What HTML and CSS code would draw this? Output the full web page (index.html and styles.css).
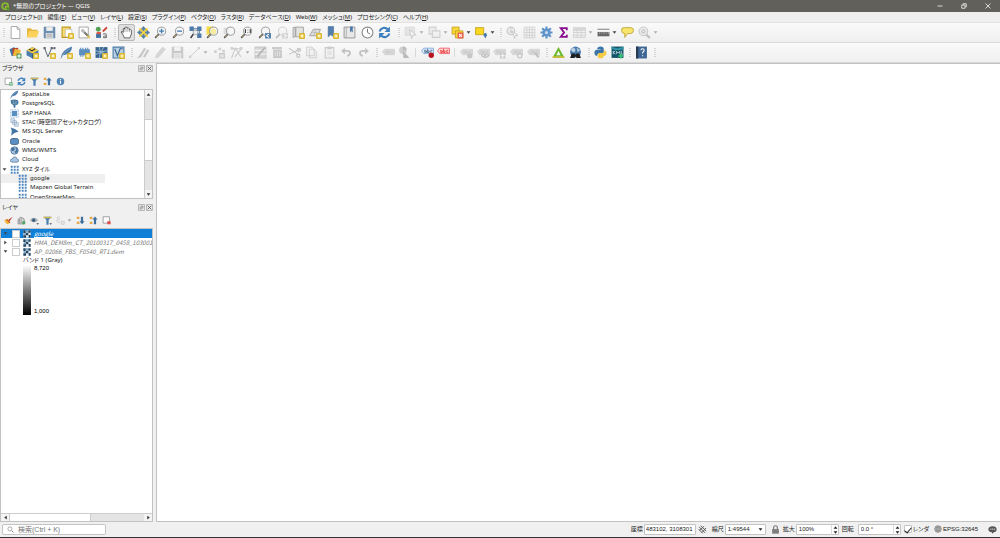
FILE: index.html
```html
<!DOCTYPE html>
<html lang="ja">
<head>
<meta charset="utf-8">
<title>*無題のプロジェクト — QGIS</title>
<link rel="stylesheet" href="styles.css">
</head>
<body>
<svg class="defs" aria-hidden="true">
<symbol id="star" viewBox="0 0 24 24"><rect x="13" y="13" width="11" height="11" rx="2" fill="#d9b52b"/><path d="M18.500 14.500v8M14.500 18.500h8M16 16l5 5M21 16l-5 5" stroke="#fff7c8" stroke-width="1.500"/></symbol>
<symbol id="mag" viewBox="0 0 24 24"><path d="M9 15L3 21" stroke="#555" stroke-width="3" stroke-linecap="round"/><path d="M7 17L4 20" stroke="#c9a93a" stroke-width="1.500"/><circle cx="14" cy="9.500" r="7.500" fill="#f4f6f8" fill-opacity=".8" stroke="#888" stroke-width="1.500"/></symbol>
<symbol id="new" viewBox="0 0 24 24"><path d="M4 1h11l5 5v17H4z" fill="#fff" stroke="#999" stroke-width="1.500"/><path d="M15 1v5h5" fill="none" stroke="#999" stroke-width="1.500"/></symbol>
<symbol id="open" viewBox="0 0 24 24"><path d="M2 21V4h7l2 3h10v4" fill="#e3b53e"/><path d="M2 21L6 9h18l-4 12z" fill="#fad25c"/></symbol>
<symbol id="save" viewBox="0 0 24 24"><path d="M2 2h20v20H2z" fill="#6c8fb4" stroke="#55779b"/><path d="M6 2h12v7H6z" fill="#eee"/><path d="M5 13h14v9H5z" fill="#ddd"/><path d="M7 16h10M7 19h10" stroke="#888"/></symbol>
<symbol id="layout" viewBox="0 0 24 24"><path d="M2 2h15v19H2z" fill="#f5dc74" stroke="#c39a1f" stroke-width="2"/><path d="M8 6h12v14H8z" fill="#fff" stroke="#aaa"/><use href="#star"/></symbol>
<symbol id="manager" viewBox="0 0 24 24"><path d="M2 2h17v20H2z" fill="#fff" stroke="#999" stroke-width="1.500"/><path d="M7 7l13 13" stroke="#777" stroke-width="4"/><path d="M7 7l5 5" stroke="#bbb" stroke-width="5"/><path d="M17 18l5 4" stroke="#e6c342" stroke-width="3"/></symbol>
<symbol id="style" viewBox="0 0 24 24"><circle cx="6" cy="6" r="4.500" fill="#54a052"/><path d="M13 9l8-8 2 3-7 7z" fill="#c43" /><path d="M2 14h9v8H2z" fill="#3f6f9f"/><path d="M3 11h8v4H3z" fill="#d54"/><path d="M15 15q6-2 6 2v5m0-4q-6 0-5 3 2 2 5-1" fill="none" stroke="#777" stroke-width="2"/></symbol>
<symbol id="hand" viewBox="0 0 24 24"><path d="M8 22l-2-5-4-6q1-3 4 1V5q2-3 3 1V3q2-3 4 0v1q3-2 4 1v2q3-1 4 1v7l-3 7z" fill="#fff" stroke="#444" stroke-width="1.500"/><path d="M9 6v5M13 4v7M17 6v5" stroke="#555"/></symbol>
<symbol id="pansel" viewBox="0 0 24 24"><path d="M4 4h6v6H4zM14 4h6v6h-6zM4 14h6v6H4zM14 14h6v6h-6z" fill="#f7d438"/><path d="M12 0l5 6h-3v4h4V7l6 5-6 5v-3h-4v4h3l-5 6-5-6h3v-4H6v3l-6-5 6-5v3h4V6H7z" fill="#587fa8"/><path d="M9 9h6v6H9z" fill="#f7d438"/></symbol>
<symbol id="zin" viewBox="0 0 24 24"><use href="#mag"/><path d="M9.500 9.500h9M14 5v9" stroke="#477db5" stroke-width="2.500"/></symbol>
<symbol id="zout" viewBox="0 0 24 24"><use href="#mag"/><path d="M9.500 9.500h9" stroke="#477db5" stroke-width="2.500"/></symbol>
<symbol id="zfull" viewBox="0 0 24 24"><path d="M1 1h8v8H1zM15 1h8v8h-8zM15 14h8v8h-8z" fill="#4c7aaa"/><path d="M5 5h14v13M12 11l7 7M6 17L18 5" stroke="#547ea8" stroke-width="2" fill="none"/><path d="M8 15l-5 7" stroke="#444" stroke-width="3"/><path d="M8 8h8v8H8z" fill="#e8eef2" stroke="#777"/></symbol>
<symbol id="zsel" viewBox="0 0 24 24"><path d="M1 1h13v15H1z" fill="#f6dc40"/><use href="#mag"/><circle cx="14" cy="10" r="5" fill="#f6ea9c"/></symbol>
<symbol id="zlayer" viewBox="0 0 24 24"><path d="M1 3h11v12H1z" fill="#ddd"/><use href="#mag"/></symbol>
<symbol id="znative" viewBox="0 0 24 24"><use href="#mag"/><path d="M10 6v7M19 6v7M14.500 7v1M14.500 11v1" stroke="#333" stroke-width="2"/></symbol>
<symbol id="zlast" viewBox="0 0 24 24"><use href="#mag"/><path d="M13 13h11v10H13z" fill="#5681ad"/><path d="M20 15l-4 3 4 3" fill="none" stroke="#fff" stroke-width="2"/></symbol>
<symbol id="znext" viewBox="0 0 24 24"><use href="#mag"/><path d="M13 13h11v10H13z" fill="#aaa"/><path d="M17 15l4 3-4 3" fill="none" stroke="#fff" stroke-width="2"/></symbol>
<symbol id="map" viewBox="0 0 24 24"><path d="M2 3l4-1v18l-4 1zM7 2h14v18H7z" fill="#e2e2e0" stroke="#999" stroke-width="1.500"/><use href="#star"/></symbol>
<symbol id="map3d" viewBox="0 0 24 24"><path d="M8 6h13l-4 12H1z" fill="#ddd" stroke="#999" stroke-width="1.500"/><path d="M6 12h10M12 6l-3 12" stroke="#aaa"/><use href="#star"/></symbol>
<symbol id="bm" viewBox="0 0 24 24"><path d="M4 1h10v19l-5-4-5 4z" fill="#537faf" stroke="#426a94"/><use href="#star"/></symbol>
<symbol id="book" viewBox="0 0 24 24"><path d="M2 2h20v20H2z" fill="#e8e8e8" stroke="#888" stroke-width="1.500"/><path d="M6 2v20" stroke="#888"/><path d="M13 1h5v11l-2.500-3L13 12z" fill="#4c7aaa"/></symbol>
<symbol id="clock" viewBox="0 0 24 24"><circle cx="12" cy="12" r="10" fill="#fff" stroke="#888" stroke-width="2"/><path d="M12 5v7l5 3" fill="none" stroke="#777" stroke-width="1.800"/></symbol>
<symbol id="refresh" viewBox="0 0 24 24"><path d="M3 10a9 9 0 0 1 15-4M21 14a9 9 0 0 1-15 4" fill="none" stroke="#3e7fbd" stroke-width="4"/><path d="M22 1v10H12zM2 23V13h10z" fill="#3e7fbd"/></symbol>
<symbol id="select" viewBox="0 0 24 24"><path d="M2 2h17v15H2z" fill="#ccc" stroke="#999" stroke-width="1.500" stroke-dasharray="3 1"/><path d="M10 7l12 9-6 1-2 6z" fill="#fff" stroke="#777" stroke-width="1.500"/></symbol>
<symbol id="stack" viewBox="0 0 24 24"><path d="M2 2h13v13H2z" fill="#ddd" stroke="#999" stroke-width="2"/><path d="M8 9h14v12H8z" fill="#eee" stroke="#999" stroke-width="2"/></symbol>
<symbol id="desel" viewBox="0 0 24 24"><path d="M2 2h13v13H2z" fill="#f6d938" stroke="#c59d1b" stroke-width="1.500"/><path d="M8 9h14v13H8z" fill="#f6d938" stroke="#c59d1b" stroke-width="1.500"/><path d="M12 12h11v11H12z" fill="#e4604c"/><path d="M15 15l5 5M20 15l-5 5" stroke="#fff" stroke-width="2"/></symbol>
<symbol id="selloc" viewBox="0 0 24 24"><path d="M1 3h15v13H1z" fill="#f8d91d" stroke="#c59d1b" stroke-width="1.500"/><path d="M19 23l-3-6q0-4 3-4t3 4z" fill="#477aaa"/></symbol>
<symbol id="ident" viewBox="0 0 24 24"><circle cx="9" cy="9" r="7" fill="#ddd" stroke="#888" stroke-width="2"/><path d="M9 8v5M9 4v2" stroke="#666" stroke-width="2"/><path d="M12 10l10 7-5 1-1 5z" fill="#fff" stroke="#777" stroke-width="1.500"/></symbol>
<symbol id="grid" viewBox="0 0 24 24"><path d="M2 2h20v20H2zM2 7h20M2 12h20M2 17h20M7 2v20M12 2v20M17 2v20" fill="#eee" stroke="#999" stroke-width="1.500"/></symbol>
<symbol id="gear" viewBox="0 0 24 24"><path d="M12 1v22M1 12h22M4 4l16 16M20 4L4 20" stroke="#5e94c9" stroke-width="4"/><circle cx="12" cy="12" r="7.500" fill="#5e94c9"/><circle cx="12" cy="12" r="3" fill="#c9dced"/></symbol>
<symbol id="sigma" viewBox="0 0 24 24"><path d="M18 8V4H7l6 8-6 8h11v-4" fill="none" stroke="#8a0d91" stroke-width="3.500"/></symbol>
<symbol id="table" viewBox="0 0 24 24"><path d="M1 3h22v18H1zM1 8h22M1 12h22M1 17h22M8 3v18M15 3v18" fill="#eee" stroke="#999" stroke-width="1.500"/><path d="M1 3h22v5H1z" fill="#aaa"/></symbol>
<symbol id="ruler" viewBox="0 0 24 24"><path d="M1 6h22" stroke="#666" stroke-width="1.500"/><path d="M1 11h22v8H1z" fill="#666"/><path d="M5 11v4M9 11v3M13 11v4M17 11v3M21 11v4" stroke="#ccc" stroke-width="1"/></symbol>
<symbol id="tip" viewBox="0 0 24 24"><path d="M7 3h11q5 0 5 5t-5 6h-6l-5 7v-7q-6 0-6-6t6-5z" fill="#f8e56b" stroke="#b99b2b" stroke-width="1.500"/></symbol>
<symbol id="gearmag" viewBox="0 0 24 24"><circle cx="10" cy="10" r="8" fill="#ddd" stroke="#888" stroke-width="2"/><circle cx="10" cy="10" r="3" fill="none" stroke="#777" stroke-width="2"/><path d="M15 16l7 6" stroke="#777" stroke-width="4"/></symbol>
<symbol id="dsm" viewBox="0 0 24 24"><path d="M1 6l9-4 4 13-9 4z" fill="#3f75a8"/><path d="M6 4l11-1v14H7z" fill="#b54732"/><path d="M11 5l11 3-4 12-11-3z" fill="#f0b735"/><path d="M14 14h9v9h-9z" fill="#45965a"/><path d="M18.500 15v7M15 18.500h7" stroke="#fff" stroke-width="2"/></symbol>
<symbol id="gpkg" viewBox="0 0 24 24"><path d="M1 8l11-6 11 6v9l-11 6L1 17z" fill="#4b7eae"/><path d="M1 8l11-6 11 6-11 6z" fill="#f0c947"/><path d="M6 6l5 3 6-4" stroke="#333" stroke-width="2" fill="none"/><path d="M12 14v9" stroke="#345b82" stroke-width="2"/><use href="#star"/></symbol>
<symbol id="shp" viewBox="0 0 24 24"><path d="M3 4l6 16L16 4h6" fill="none" stroke="#55616c" stroke-width="1.800"/><path d="M1 2h4v4H1zM14 2h4v4h-4zM20 2h3v4h-3z" fill="#667"/><use href="#star"/></symbol>
<symbol id="feather" viewBox="0 0 24 24"><path d="M1 23Q3 7 22 1q0 9-7 13-5 3-10 3l-3 6z" fill="#4a7cad"/><path d="M2 23Q7 11 18 5" fill="none" stroke="#a9c3dc"/></symbol>
<symbol id="spl" viewBox="0 0 24 24"><use href="#feather"/><use href="#star"/></symbol>
<symbol id="mem" viewBox="0 0 24 24"><path d="M2 6h20v11H2z" fill="#5b8fc0"/><path d="M5 3v17M9 3v17M14 3v17M18 3v17" stroke="#5b8fc0" stroke-width="2"/><use href="#star"/></symbol>
<symbol id="mesh" viewBox="0 0 24 24"><path d="M1 2h22v20H1z" fill="#38658f"/><path d="M1 9q9 3 22 0M1 16q10-7 22 0M8 2q4 9 0 20M16 2q-7 10 1 20" fill="none" stroke="#aac8e0" stroke-width="1.500"/><use href="#star"/></symbol>
<symbol id="virt" viewBox="0 0 24 24"><path d="M2 2h20v20H2z" fill="#b9cfe2" stroke="#4d7ba6" stroke-width="2"/><path d="M5 5l5 13 5-13h5" fill="none" stroke="#366491" stroke-width="2"/><use href="#star"/></symbol>
<symbol id="edits" viewBox="0 0 24 24"><path d="M3 20L13 3l4 2L7 21zM11 20L19 6l4 2-8 13z" fill="#888"/><path d="M1 22l6-4" stroke="#777" stroke-width="2"/></symbol>
<symbol id="pencil" viewBox="0 0 24 24"><path d="M3 22l2-7L16 2l5 4L10 19z" fill="#aaa" stroke="#888"/></symbol>
<symbol id="line" viewBox="0 0 24 24"><path d="M4 20L20 4" stroke="#888" stroke-width="1.500"/><path d="M2 18h4v4H2zM18 2h4v4h-4z" fill="#999"/></symbol>
<symbol id="points" viewBox="0 0 24 24"><path d="M2 8h5v5H2zM10 3h5v5h-5zM17 7h5v5h-5z" fill="#999"/><path d="M12 14h9v8h-9z" fill="#ccc" stroke="#888" stroke-width="2"/></symbol>
<symbol id="vertex" viewBox="0 0 24 24"><path d="M3 22L10 4l10 16M2 5h20M22 4L9 20" stroke="#888" stroke-width="2" fill="none"/><path d="M1 2h5v5H1zM18 2h5v5h-5z" fill="#999"/></symbol>
<symbol id="attr" viewBox="0 0 24 24"><path d="M2 2h20v20H2z" fill="#aaa" stroke="#888" stroke-width="2"/><path d="M2 8h20M2 15h20" stroke="#eee" stroke-width="2"/><path d="M6 20L20 3" stroke="#555" stroke-width="3"/></symbol>
<symbol id="trash" viewBox="0 0 24 24"><path d="M4 7h16v15H4zM2 2h18v4H2z" fill="#888"/><path d="M8 10v9M12 10v9M16 10v9" stroke="#ddd" stroke-width="1.500"/></symbol>
<symbol id="cut" viewBox="0 0 24 24"><path d="M2 4l17 12M2 15L22 6" stroke="#777" stroke-width="2"/><circle cx="19" cy="18" r="3" fill="none" stroke="#777" stroke-width="2"/><circle cx="20" cy="7" r="3" fill="none" stroke="#777" stroke-width="2"/></symbol>
<symbol id="copy" viewBox="0 0 24 24"><path d="M3 2h10l4 4v12H3zM8 6h9l4 4v12H8z" fill="#eee" stroke="#888" stroke-width="1.500"/></symbol>
<symbol id="paste" viewBox="0 0 24 24"><path d="M4 3h16v19H4z" fill="#eee" stroke="#888" stroke-width="2"/><path d="M8 1h8v5H8z" fill="#888"/><path d="M8 9h8v8H8z" fill="#ccc"/></symbol>
<symbol id="undo" viewBox="0 0 24 24"><path d="M7 9h7q6 1 4 6l-4 4" fill="none" stroke="#777" stroke-width="3.500"/><path d="M9 3v12L2 9z" fill="#777"/></symbol>
<symbol id="redo" viewBox="0 0 24 24"><path d="M17 9h-7q-6 1-4 6l4 4" fill="none" stroke="#777" stroke-width="3.500"/><path d="M15 3v12l7-6z" fill="#777"/></symbol>
<symbol id="tag" viewBox="0 0 24 24"><path d="M1 10l4-4h18v10H5z" fill="#b9b6a4" stroke="#999" stroke-width="1.500"/><path d="M7 9v4h3V9H7M12 8v5h3v-3h-3M21 9h-3v4h3" fill="none" stroke="#777" stroke-width="1"/></symbol>
<symbol id="diag" viewBox="0 0 24 24"><circle cx="9" cy="8" r="7" fill="#999" /><path d="M9 8l12 14H10zM9 8V1a7 7 0 0 1 7 7z" fill="#666"/></symbol>
<symbol id="tagblue" viewBox="0 0 24 24"><path d="M1 9l4-5h18v10H5z" fill="#d7e7f8" stroke="#77a7dc" stroke-width="1.500"/><path d="M7 7v5h3V9H7M12 5v7h3V9h-3M21 8h-3v4" fill="none" stroke="#357" stroke-width="1.300"/><circle cx="19" cy="17" r="5" fill="#b91520"/></symbol>
<symbol id="tagred" viewBox="0 0 24 24"><path d="M1 9l4-5h18v10H5z" fill="#ffdada" stroke="#ec5560" stroke-width="1.500"/><path d="M7 7v5h3V9H7M12 5v7h3V9h-3M21 8h-3v4h3" fill="none" stroke="#e33" stroke-width="1.500"/></symbol>
<symbol id="tagp" viewBox="0 0 24 24"><use href="#tag"/><circle cx="18" cy="18" r="5" fill="#888"/></symbol>
<symbol id="tageye" viewBox="0 0 24 24"><use href="#tag"/><path d="M8 18q7-7 14 0-7 6-14 0" fill="#fff" stroke="#777" stroke-width="2"/><circle cx="15" cy="18" r="2" fill="#555"/></symbol>
<symbol id="tagmove" viewBox="0 0 24 24"><use href="#tag"/><path d="M13 13h10v10H13z" fill="#888"/><path d="M18 14v8M14 18h8" stroke="#fff" stroke-width="2"/></symbol>
<symbol id="tagrot" viewBox="0 0 24 24"><use href="#tag"/><circle cx="18" cy="18" r="4" fill="#eee" stroke="#777" stroke-width="2"/></symbol>
<symbol id="tagedit" viewBox="0 0 24 24"><use href="#tag"/><path d="M13 14l7 8 3-2-6-8z" fill="#777"/></symbol>
<symbol id="tri" viewBox="0 0 24 24"><path d="M12 2L2 20h20z" fill="#6ab82d"/><path d="M12 9l4 8H8z" fill="#f7f7f7"/><path d="M1 19h22v3H1z" fill="#c9b52a"/></symbol>
<symbol id="binoc" viewBox="0 0 24 24"><circle cx="12" cy="11" r="10" fill="#4779aa"/><path d="M3 7q5-6 8-2t-3 7zM14 3l7 5-5 3z" fill="#bad0e3"/><path d="M5 14h5l2 2 2-2h5l3 8h-8l-2-3-2 3H2z" fill="#1d2022"/></symbol>
<symbol id="py" viewBox="0 0 24 24"><path d="M6 6q0-5 6-5t6 5v5q0 3-3 3H9q-3 0-3 4H4q-4-2-3-8 1-3 4-3h7V6z" fill="#3c76a8"/><path d="M18 18q0 5-6 5t-5-5v-2q0-3 3-3h5q4 0 4-5h1q4 2 3 7-1 3-4 3h-6z" fill="#f5cb45"/></symbol>
<symbol id="kml" viewBox="0 0 24 24"><path d="M1 1h22v21H1z" fill="#17566a"/><path d="M1 1q10 6 22 0v5q-11 4-22-1z" fill="#2e91a4"/><path d="M4 9v6M8 9l-4 3 4 3M10 15v-5l3 3 3-3v5M19 9v6h3" fill="none" stroke="#d8eef2" stroke-width="1.300"/><path d="M18 14v9M13.500 18.500h9" stroke="#36c872" stroke-width="3"/></symbol>
<symbol id="help" viewBox="0 0 24 24"><path d="M2 1h20v22H2z" fill="#3e6795"/><path d="M2 1h4v22H2z" fill="#26394d"/><path d="M11 8q0-3 3-3t3 3q0 2-3 4v2M14 17v2" fill="none" stroke="#fff" stroke-width="2"/></symbol>
<symbol id="addl" viewBox="0 0 24 24"><path d="M3 3h17v17H3z" fill="#fff" stroke="#888" stroke-width="1.800"/><path d="M14 14h9v9h-9z" fill="#52a56a"/><path d="M18.500 15v7M15 18.500h7" stroke="#fff" stroke-width="1.500"/></symbol>
<symbol id="funnel" viewBox="0 0 24 24"><path d="M2 2h20l-7 9v12H9V11z" fill="#4d80b2"/><path d="M1 2h22v4H1z" fill="#d1b857"/></symbol>
<symbol id="collapse" viewBox="0 0 24 24"><path d="M2 2h7v6H2zM2 15h7v6H2z" fill="#e4a849"/><path d="M16 1l7 8h-4v13h-6V9H9z" fill="#3f719f"/></symbol>
<symbol id="expand" viewBox="0 0 24 24"><path d="M2 2h7v6H2zM2 15h7v6H2z" fill="#e4a849"/><path d="M16 22l7-8h-4V2h-6v12H9z" fill="#3f719f"/></symbol>
<symbol id="info" viewBox="0 0 24 24"><circle cx="12" cy="12" r="10" fill="#5285b5"/><path d="M12 10v8M12 5v3" stroke="#fff" stroke-width="3"/></symbol>
<symbol id="brush" viewBox="0 0 24 24"><path d="M23 2L10 11l4 4z" fill="#be3f2d"/><path d="M1 10l8-2 8 9-7 5Q3 20 1 10z" fill="#efb33e"/><path d="M7 9l9 9" stroke="#bb632b" stroke-width="3"/></symbol>
<symbol id="group" viewBox="0 0 24 24"><path d="M3 9l7-6 9 5v13H3z" fill="#ddd" stroke="#777" stroke-width="2"/><path d="M7 8v11M11 6v13" stroke="#888" stroke-width="2"/><path d="M14 14h8v8h-8z" fill="#52a56a"/></symbol>
<symbol id="eye" viewBox="0 0 24 24"><path d="M1 11Q10 1 20 11 10 20 1 11" fill="#cfd9e3" stroke="#888" stroke-width="2"/><circle cx="10" cy="11" r="4.500" fill="#355d84"/><path d="M17 19h7l-3.500 4z" fill="#444"/></symbol>
<symbol id="funneld" viewBox="0 0 24 24"><use href="#funnel"/><path d="M17 19h7l-3.500 4z" fill="#444"/></symbol>
<symbol id="expr" viewBox="0 0 24 24"><path d="M11 3Q3 1 3 6q0 3 6 3-7 0-7 5 1 5 9 2" fill="none" stroke="#888" stroke-width="2"/><path d="M14 14v8h8v-8z" fill="#ddd" stroke="#888" stroke-width="2"/></symbol>
<symbol id="remove" viewBox="0 0 24 24"><path d="M3 2h17v17H3z" fill="#fff" stroke="#888" stroke-width="2"/><path d="M14 14h9v8h-9z" fill="#de5050"/></symbol>
<symbol id="pg" viewBox="0 0 24 24"><path d="M2 3q8-3 19 0 4 7-2 13h-4l-1 7h-4l-1-7Q1 15 2 3z" fill="#47789f"/><path d="M9 4v8q5 2 5-2M16 5v10" stroke="#a9c4d8" fill="none" stroke-width="1.500"/></symbol>
<symbol id="hana" viewBox="0 0 24 24"><path d="M5 5h14v14H5z" fill="#5a8fc2"/><path d="M2 2h20v20H2z" fill="none" stroke="#8fb1d1" stroke-width="3" stroke-dasharray="2 2"/></symbol>
<symbol id="stac" viewBox="0 0 24 24"><path d="M2 2h10v10H2zM7 7h10v10H7zM12 12h10v10H12z" fill="#dfe8f1" stroke="#8fa9c1" stroke-width="1.700"/></symbol>
<symbol id="ms" viewBox="0 0 24 24"><path d="M2 1q12 2 21 11Q12 14 2 23q5-11 0-22z" fill="#4475a4"/></symbol>
<symbol id="ora" viewBox="0 0 24 24"><rect x="1" y="4" width="22" height="16" rx="6" fill="#5b8fc1" stroke="#2f5377" stroke-width="2"/></symbol>
<symbol id="globe" viewBox="0 0 24 24"><circle cx="12" cy="12" r="10" fill="#a9c4df" stroke="#3e6993" stroke-width="2"/><path d="M4 6l7-2 2 5-5 5-5-3zM14 3l6 4 1 8-6 4-3-4 5-4z" fill="#416f9c"/></symbol>
<symbol id="cloud" viewBox="0 0 24 24"><path d="M5 19q-5-1-4-5 1-4 5-3 1-6 7-6 5 0 6 6 5 0 4 5-1 3-4 3z" fill="#a9c4df" stroke="#55799d" stroke-width="2"/></symbol>
<symbol id="xyz" viewBox="0 0 24 24"><path d="M2 2h5v5H2zM10 2h5v5h-5zM18 2h5v5h-5zM2 10h5v5H2zM10 10h5v5h-5zM18 10h5v5h-5zM2 18h5v5H2zM10 18h5v5h-5zM18 18h5v5h-5z" fill="#4a84bd"/></symbol>
<symbol id="ras" viewBox="0 0 24 24"><path d="M1 1h22v22H1z" fill="#e5eef5"/><path d="M1 1h7v8H1zM16 1h7v7h-7zM8 8h8v8H8zM1 16h8v7H1zM17 15h6v8h-6z" fill="#234662"/><path d="M9 1h6v6H9zM2 10h5v5H2z" fill="#76a3c4"/></symbol>
<symbol id="dn" viewBox="0 0 8 8"><path d="M1 2h6L4 6z" fill="currentColor"/></symbol>
<symbol id="up" viewBox="0 0 8 8"><path d="M1 6h6L4 2z" fill="currentColor"/></symbol>
<symbol id="lt" viewBox="0 0 8 8"><path d="M6 1v6L2 4z" fill="currentColor"/></symbol>
<symbol id="rt" viewBox="0 0 8 8"><path d="M2 1v6l4-3z" fill="currentColor"/></symbol>
<symbol id="float" viewBox="0 0 12 12"><path d="M1 1h10v10H1z" fill="#eee" stroke="#888"/><path d="M3.500 5v3.500H7V5zM5 3.500h3.500V7" fill="none" stroke="#777"/></symbol>
<symbol id="close" viewBox="0 0 12 12"><path d="M1 1h10v10H1z" fill="#eee" stroke="#888"/><path d="M3 3l6 6M9 3L3 9" stroke="#555" stroke-width="1.500"/></symbol>
</svg>

<header class="titlebar">
  <svg class="logo" viewBox="0 0 24 24"><circle cx="11" cy="11" r="8" fill="none" stroke="#85b832" stroke-width="5"/><path d="M12 12l10 10" stroke="#589632" stroke-width="5"/><path d="M11 11l5 1-4 4z" fill="#eedc3c"/></svg>
  <h1>*無題のプロジェクト — QGIS</h1>
  <div class="wins">
    <button aria-label="最小化"><svg viewBox="0 0 12 12"><path d="M1 6h10" stroke="#fff" stroke-width="1.500"/></svg></button>
    <button aria-label="元に戻す"><svg viewBox="0 0 12 12"><path d="M1.500 4h6.500v6.500H1.500zM4 3.500v-2h6.500V8H9" fill="none" stroke="#fff" stroke-width="1.500"/></svg></button>
    <button aria-label="閉じる"><svg viewBox="0 0 12 12"><path d="M1 1l10 10M11 1L1 11" stroke="#fff" stroke-width="1.500"/></svg></button>
  </div>
</header>

<nav class="menubar">
  <button>プロジェクト(<u>J</u>)</button><button>編集(<u>E</u>)</button><button>ビュー(<u>V</u>)</button><button>レイヤ(<u>L</u>)</button><button>設定(<u>S</u>)</button><button>プラグイン(<u>P</u>)</button><button>ベクタ(<u>O</u>)</button><button>ラスタ(<u>R</u>)</button><button>データベース(<u>D</u>)</button><button>Web(<u>W</u>)</button><button>メッシュ(<u>M</u>)</button><button>プロセシング(<u>C</u>)</button><button>ヘルプ(<u>H</u>)</button>
</nav>

<div class="toolbar" role="toolbar" aria-label="プロジェクト">
  <div class="grp g-file">
    <button aria-label="新規"><svg><use href="#new"/></svg></button>
    <button aria-label="開く"><svg><use href="#open"/></svg></button>
    <button aria-label="保存"><svg><use href="#save"/></svg></button>
    <button aria-label="新規レイアウト"><svg><use href="#layout"/></svg></button>
    <button aria-label="レイアウトマネージャ"><svg><use href="#manager"/></svg></button>
    <button aria-label="スタイルマネージャ"><svg><use href="#style"/></svg></button>
  </div>
  <div class="grp g-nav">
    <button class="on" aria-label="地図を移動"><svg><use href="#hand"/></svg></button>
    <button aria-label="選択部分に移動"><svg><use href="#pansel"/></svg></button>
    <button aria-label="拡大"><svg><use href="#zin"/></svg></button>
    <button aria-label="縮小"><svg><use href="#zout"/></svg></button>
    <button aria-label="全域表示"><svg><use href="#zfull"/></svg></button>
    <button aria-label="選択部分にズーム"><svg><use href="#zsel"/></svg></button>
    <button aria-label="レイヤにズーム"><svg><use href="#zlayer"/></svg></button>
    <button aria-label="ネイティブ解像度"><svg><use href="#znative"/></svg></button>
    <button aria-label="前の表示"><svg><use href="#zlast"/></svg></button>
    <button disabled aria-label="次の表示"><svg><use href="#znext"/></svg></button>
    <button aria-label="新規地図ビュー"><svg><use href="#map"/></svg></button>
    <button aria-label="新規3D地図ビュー"><svg><use href="#map3d"/></svg></button>
    <button aria-label="新規ブックマーク"><svg><use href="#bm"/></svg></button>
    <button aria-label="ブックマーク"><svg><use href="#book"/></svg></button>
    <button aria-label="時系列"><svg><use href="#clock"/></svg></button>
    <button aria-label="再読み込み"><svg><use href="#refresh"/></svg></button>
  </div>
  <div class="grp g-sel">
    <button class="drop" disabled aria-label="地物選択"><svg><use href="#select"/></svg><svg class="ar"><use href="#dn"/></svg></button>
    <button class="drop" disabled aria-label="値による選択"><svg><use href="#stack"/></svg><svg class="ar"><use href="#dn"/></svg></button>
    <button class="drop" aria-label="選択解除"><svg><use href="#desel"/></svg><svg class="ar"><use href="#dn"/></svg></button>
    <button class="drop" aria-label="場所による選択"><svg><use href="#selloc"/></svg><svg class="ar"><use href="#dn"/></svg></button>
  </div>
  <div class="grp g-attr">
    <button disabled aria-label="地物情報"><svg><use href="#ident"/></svg></button>
    <button disabled aria-label="属性テーブル"><svg><use href="#grid"/></svg></button>
    <button aria-label="ツールボックス"><svg><use href="#gear"/></svg></button>
    <button aria-label="統計"><svg><use href="#sigma"/></svg></button>
    <button class="drop" disabled aria-label="テーブル"><svg><use href="#table"/></svg><svg class="ar"><use href="#dn"/></svg></button>
    <button class="drop" aria-label="計測"><svg><use href="#ruler"/></svg><svg class="ar"><use href="#dn"/></svg></button>
    <button aria-label="地図のヒント"><svg><use href="#tip"/></svg></button>
    <button class="drop" disabled aria-label="アクション"><svg><use href="#gearmag"/></svg><svg class="ar"><use href="#dn"/></svg></button>
  </div>
</div>

<div class="toolbar" role="toolbar" aria-label="レイヤ管理">
  <div class="grp g-src">
    <button aria-label="データソース"><svg><use href="#dsm"/></svg></button>
    <button aria-label="GeoPackage"><svg><use href="#gpkg"/></svg></button>
    <button aria-label="シェープファイル"><svg><use href="#shp"/></svg></button>
    <button aria-label="SpatiaLite レイヤ"><svg><use href="#spl"/></svg></button>
    <button aria-label="一時レイヤ"><svg><use href="#mem"/></svg></button>
    <button aria-label="メッシュレイヤ"><svg><use href="#mesh"/></svg></button>
    <button aria-label="仮想レイヤ"><svg><use href="#virt"/></svg></button>
  </div>
  <div class="grp g-edit">
    <button disabled aria-label="現在の編集"><svg><use href="#edits"/></svg></button>
    <button disabled aria-label="編集モード"><svg><use href="#pencil"/></svg></button>
    <button disabled aria-label="編集を保存"><svg><use href="#save"/></svg></button>
    <button class="drop" disabled aria-label="線分"><svg><use href="#line"/></svg><svg class="ar"><use href="#dn"/></svg></button>
    <button disabled aria-label="地物追加"><svg><use href="#points"/></svg></button>
    <button class="drop" disabled aria-label="頂点ツール"><svg><use href="#vertex"/></svg><svg class="ar"><use href="#dn"/></svg></button>
    <button disabled aria-label="属性変更"><svg><use href="#attr"/></svg></button>
    <button disabled aria-label="削除"><svg><use href="#trash"/></svg></button>
    <button disabled aria-label="切り取り"><svg><use href="#cut"/></svg></button>
    <button disabled aria-label="コピー"><svg><use href="#copy"/></svg></button>
    <button disabled aria-label="貼り付け"><svg><use href="#paste"/></svg></button>
    <button disabled aria-label="元に戻す"><svg><use href="#undo"/></svg></button>
    <button disabled aria-label="やり直す"><svg><use href="#redo"/></svg></button>
  </div>
  <div class="grp g-lab">
    <button disabled aria-label="ラベル"><svg><use href="#tag"/></svg></button>
    <button disabled aria-label="ダイアグラム"><svg><use href="#diag"/></svg></button>
  </div>
  <div class="grp sep g-pin">
    <button aria-label="固定ラベル"><svg><use href="#tagblue"/></svg></button>
    <button aria-label="未配置ラベル"><svg><use href="#tagred"/></svg></button>
  </div>
  <div class="grp sep g-tags">
    <button disabled aria-label="ラベル固定"><svg><use href="#tagp"/></svg></button>
    <button disabled aria-label="ラベル表示"><svg><use href="#tageye"/></svg></button>
    <button disabled aria-label="ラベル移動"><svg><use href="#tagmove"/></svg></button>
    <button disabled aria-label="ラベル回転"><svg><use href="#tagrot"/></svg></button>
    <button disabled aria-label="ラベル変更"><svg><use href="#tagedit"/></svg></button>
  </div>
  <div class="grp g-pair">
    <button aria-label="測量"><svg><use href="#tri"/></svg></button>
    <button aria-label="検索"><svg><use href="#binoc"/></svg></button>
  </div>
  <div class="grp g-pair">
    <button aria-label="Python"><svg><use href="#py"/></svg></button>
    <button aria-label="KML"><svg><use href="#kml"/></svg></button>
  </div>
  <div class="grp g-help"><button aria-label="ヘルプ"><svg><use href="#help"/></svg></button></div>
  <div class="grp"></div>
</div>

<main class="work">
  <aside class="docks">
    <section class="dock browser">
      <div class="dock-title"><h2>ブラウザ</h2><button aria-label="フロート"><svg><use href="#float"/></svg></button><button aria-label="閉じる"><svg><use href="#close"/></svg></button></div>
      <div class="dock-tools">
        <button aria-label="レイヤ追加"><svg><use href="#addl"/></svg></button>
        <button aria-label="更新"><svg><use href="#refresh"/></svg></button>
        <button aria-label="フィルタ"><svg><use href="#funnel"/></svg></button>
        <button aria-label="折りたたむ"><svg><use href="#collapse"/></svg></button>
        <button aria-label="情報"><svg><use href="#info"/></svg></button>
      </div>
      <div class="box">
        <ul class="tree">
          <li><svg><use href="#feather"/></svg>SpatiaLite</li>
          <li><svg><use href="#pg"/></svg>PostgreSQL</li>
          <li><svg><use href="#hana"/></svg>SAP HANA</li>
          <li><svg><use href="#stac"/></svg>STAC（時空間アセットカタログ）</li>
          <li><svg><use href="#ms"/></svg>MS SQL Server</li>
          <li><svg><use href="#ora"/></svg>Oracle</li>
          <li><svg><use href="#globe"/></svg>WMS/WMTS</li>
          <li><svg><use href="#cloud"/></svg>Cloud</li>
          <li class="parent"><svg class="tw"><use href="#dn"/></svg><svg><use href="#xyz"/></svg>XYZ タイル</li>
          <li class="child cur"><svg><use href="#xyz"/></svg>google</li>
          <li class="child"><svg><use href="#xyz"/></svg>Mapzen Global Terrain</li>
          <li class="child"><svg><use href="#xyz"/></svg>OpenStreetMap</li>
        </ul>
        <div class="vscroll"><button aria-label="上へ"><svg><use href="#up"/></svg></button><div class="track"><div class="thumb"></div></div><button aria-label="下へ"><svg><use href="#dn"/></svg></button></div>
      </div>
    </section>
    <section class="dock layers">
      <div class="dock-title"><h2>レイヤ</h2><button aria-label="フロート"><svg><use href="#float"/></svg></button><button aria-label="閉じる"><svg><use href="#close"/></svg></button></div>
      <div class="dock-tools">
        <button aria-label="スタイル"><svg><use href="#brush"/></svg></button>
        <button aria-label="グループ追加"><svg><use href="#group"/></svg></button>
        <button aria-label="表示テーマ"><svg><use href="#eye"/></svg></button>
        <button aria-label="凡例フィルタ"><svg><use href="#funneld"/></svg></button>
        <button class="drop" disabled aria-label="式フィルタ"><svg><use href="#expr"/></svg><svg class="ar"><use href="#dn"/></svg></button>
        <button aria-label="展開"><svg><use href="#expand"/></svg></button>
        <button aria-label="折りたたむ"><svg><use href="#collapse"/></svg></button>
        <button aria-label="削除"><svg><use href="#remove"/></svg></button>
      </div>
      <div class="box column">
        <ul class="ltree">
          <li class="sel"><svg class="tw"><use href="#dn"/></svg><input type="checkbox" id="l1"><svg><use href="#ras"/></svg><label for="l1"><u>google</u></label></li>
          <li><svg class="tw"><use href="#rt"/></svg><input type="checkbox" id="l2"><svg><use href="#ras"/></svg><label for="l2">HMA_DEM8m_CT_20100317_0458_103001</label></li>
          <li><svg class="tw"><use href="#dn"/></svg><input type="checkbox" id="l3"><svg><use href="#ras"/></svg><label for="l3">AP_02066_FBS_F0540_RT1.dem</label></li>
        </ul>
        <div class="legend">
          <p>バンド 1 (Gray)</p>
          <div class="ramp"><div class="bar"></div><div class="ends"><span>8,720</span><span>1,000</span></div></div>
        </div>
        <div class="hscroll"><button aria-label="左へ"><svg><use href="#lt"/></svg></button><div class="track"><div class="thumb"></div></div><button aria-label="右へ"><svg><use href="#rt"/></svg></button></div>
      </div>
    </section>
  </aside>
  <div class="canvas"></div>
</main>

<footer class="status">
  <div class="search"><svg viewBox="0 0 12 12"><circle cx="5" cy="5" r="3.500" fill="none" stroke="#777"/><path d="M8 8l3 3" stroke="#777" stroke-width="1.500"/></svg><input type="text" aria-label="検索" placeholder="検索(Ctrl + K)"></div>
  <div class="info">
    <label for="coord">座標</label><input class="coord" id="coord" type="text" value="483102, 3108301">
    <button class="ext" aria-label="範囲"><svg viewBox="0 0 24 24"><path d="M3 5l16 16M7 2l15 14M2 11l10 11M5 14L16 3M11 20L21 8" stroke="#555" stroke-width="2.500"/></svg></button>
    <label for="scale">縮尺</label><div class="combo"><select id="scale"><option>1:49544</option></select><svg><use href="#dn"/></svg></div>
    <button class="lock" aria-label="縮尺を固定"><svg viewBox="0 0 24 24"><path d="M7 12V7q0-5 5-5t5 5v5" fill="none" stroke="#777" stroke-width="3"/><path d="M3 11h18v12H3z" fill="#777"/><path d="M3 15h18M3 19h18" stroke="#999"/></svg></button>
    <label for="mag-in">拡大</label><div class="spin"><input id="mag-in" type="text" value="100%"><span><svg><use href="#up"/></svg><svg><use href="#dn"/></svg></span></div>
    <label class="rot" for="rot">回転</label><div class="spin"><input id="rot" type="text" value="0.0 °"><span><svg><use href="#up"/></svg><svg><use href="#dn"/></svg></span></div>
    <input class="tick" id="render" type="checkbox" checked><label class="rl" for="render">レンダ</label>
    <button class="crs"><svg viewBox="0 0 24 24"><circle cx="12" cy="12" r="10" fill="#ccc" stroke="#777" stroke-width="2"/><path d="M2 12h20M12 2v20M5 6q7 4 14 0M5 18q7-4 14 0M9 3q-5 9 0 18M15 3q5 9 0 18" fill="none" stroke="#777" stroke-width="1.500"/></svg>EPSG:32645</button>
    <button class="msg" aria-label="メッセージ"><svg viewBox="0 0 24 24"><path d="M12 3q11 0 11 8t-8 8l-3 4-2-4Q1 18 1 11t11-8z" fill="#555"/><path d="M6 11h3M11 11h3M16 11h3" stroke="#fff" stroke-width="2.500"/></svg></button>
  </div>
</footer>
</body>
</html>
```
FILE: styles.css
```css
* { box-sizing: border-box; }
body {
  margin: 0;
  height: 100vh;
  display: flex;
  flex-direction: column;
  overflow: hidden;
  background: #f0f0f0;
  color: #222;
  font-family: "Noto Sans", "Noto Sans CJK JP", sans-serif;
  font-size: 6px;
  line-height: 9px;
  font-feature-settings: "palt";
}
button, input, select { font: inherit; color: inherit; font-feature-settings: inherit; }
button { border: 0; padding: 0; margin: 0; background: none; display: flex; align-items: center; justify-content: center; }
h1, h2, p, ul { margin: 0; padding: 0; font-size: inherit; font-weight: normal; list-style: none; }
svg { display: block; flex: none; }
.defs { width: 0; height: 0; position: absolute; }

.titlebar { flex: none; height: 12px; background: #62605a; color: #fff; display: flex; align-items: center; padding-left: 1px; }
.titlebar h1 { margin-left: 3px; }
.logo { width: 9px; height: 9px; }
.wins { margin-left: auto; display: flex; }
.wins button { width: 24px; height: 12px; }
.wins svg { width: 6px; height: 6px; }

.menubar { flex: none; height: 11px; display: flex; gap: 5px; padding: 0 5px; background: #efefef; border-bottom: 1px solid #e2e2e2; white-space: nowrap; }
u { text-underline-offset: 1px; }

.toolbar { flex: none; height: 20px; display: flex; align-items: center; background: linear-gradient(#fafafa, #efefef); border-bottom: 1px solid #d8d8d8; }
.grp { display: flex; justify-content: space-between; margin-left: 3px; padding-left: 4px; height: 17px; flex: none; position: relative; }
.grp::before { content: ""; position: absolute; left: 0; top: 4px; width: 2px; height: 9px; background: repeating-linear-gradient(#d4d4d4 0 1px, #f5f5f5 1px 2px); }
.grp.sep::before { width: 1px; background: #d8d8d8; }
.grp button { width: 17px; height: 17px; border-radius: 2px; }
.grp button.drop { width: 24px; gap: 2px; }
.grp button svg { width: 13px; height: 13px; }
.grp button svg.ar, .dock-tools svg.ar { width: 5px; height: 5px; color: #444; }
button:disabled svg { opacity: .4; filter: grayscale(1); }
.grp button.on { background: #dfdfdf; border: 1px solid #b8b8b8; }
.g-file { width: 107px; }
.g-nav { width: 279px; margin-left: 4px; }
.g-sel { width: 99px; margin-left: 5px; }
.g-attr { width: 160px; }
.g-src { width: 124px; }
.g-edit { width: 241px; margin-left: 4px; }
.g-lab { width: 37px; margin-left: 4px; }
.g-pin { width: 36px; margin-left: 2px; }
.g-tags { width: 88px; }
.g-pair { width: 38px; margin-left: 4px; }
.g-help { width: 22px; }

.work { flex: 1; min-height: 0; display: flex; }
.docks { width: 153px; flex: none; display: flex; flex-direction: column; gap: 3px; }
.dock { display: flex; flex-direction: column; }
.browser { flex: none; }
.layers { flex: 1; min-height: 0; }
.dock-title { display: flex; align-items: center; gap: 1px; height: 10px; padding-left: 2px; }
.dock-title h2 { flex: 1; }
.dock-title svg { width: 7px; height: 7px; }
.dock-tools { height: 16px; display: flex; align-items: center; gap: 4px; padding-left: 4px; }
.dock-tools svg { width: 9px; height: 9px; }
.dock-tools .drop { gap: 2px; }
.box { border: 1px solid #c2c2c2; background: #fff; display: flex; }
.browser .box { height: 110px; overflow: hidden; }
.column { flex: 1; flex-direction: column; overflow: hidden; }
.tree { flex: 1; height: 112px; display: grid; grid-template-rows: repeat(12, 1fr); }
.tree li { display: flex; align-items: center; gap: 3px; padding-left: 9px; white-space: nowrap; }
.tree li svg { width: 9px; height: 9px; }
.tree .parent { padding-left: 1px; }
.tree li .tw, .ltree li .tw { width: 5px; height: 5px; color: #444; }
.tree .child { padding-left: 17px; margin-right: 39px; }
.tree .cur { background: #efefef; }
.vscroll { width: 8px; display: flex; flex-direction: column; background: #e4e4e4; border-left: 1px solid #ccc; }
.vscroll button { height: 8px; background: #f4f4f4; }
.vscroll svg, .hscroll svg { width: 5px; height: 5px; color: #333; }
.vscroll .track { flex: 1; padding-top: 21px; }
.vscroll .thumb { height: 42px; background: #fff; border: 1px solid #ccc; border-width: 1px 0; }

.ltree { display: grid; grid-auto-rows: 9px; font-family: "Noto Sans CJK JP", sans-serif; font-style: italic; color: #777; }
.ltree li { display: flex; align-items: center; white-space: nowrap; overflow: hidden; padding-left: 2px; }
.ltree li svg { width: 8px; height: 8px; margin-right: 3px; }
.ltree .sel { background: #0f7fd8; color: #fff; }
.ltree input { appearance: none; flex: none; width: 8px; height: 8px; margin: 0 3px 0 1px; background: #fff; border: 1px solid #ccc; }
.legend { flex: 1; padding-left: 22px; }
.ramp { display: flex; gap: 3px; height: 50px; }
.bar { width: 8px; background: linear-gradient(#fff, #000); }
.ends { display: flex; flex-direction: column; justify-content: space-between; line-height: 7px; font-family: "Liberation Sans", sans-serif; color: #000; }
.hscroll { height: 8px; display: flex; background: #e4e4e4; border-top: 1px solid #ccc; }
.hscroll button { width: 8px; background: #f4f4f4; }
.hscroll .track { flex: 1; display: flex; }
.hscroll .thumb { width: 61%; background: #fff; border: 1px solid #ccc; border-width: 0 1px; }
.canvas { flex: 1; margin-left: 3px; background: #fff; border: 1px solid #c2c2c2; border-width: 1px 0 1px 1px; }

.status { flex: none; height: 16px; display: flex; align-items: center; justify-content: space-between; padding: 0 3px 1px 2px; border-bottom: 1px solid #333; font-family: "Liberation Sans", "Noto Sans CJK JP", sans-serif; }
.status input, .status select { appearance: none; border: 1px solid #c4c4c4; background: #fff; height: 11px; padding: 0 2px; margin: 0; min-width: 0; border-radius: 1px; outline: 0; }
.search { width: 104px; display: flex; align-items: center; gap: 4px; background: #fff; border: 1px solid #c4c4c4; border-radius: 2px; padding-left: 4px; }
.search svg { width: 7px; height: 7px; }
.status .search input { flex: 1; border: 0; height: 9px; font-size: 7px; padding: 0; }
.info { display: flex; align-items: center; white-space: nowrap; }
.info label { margin-right: 1px; }
.status .coord { width: 52px; padding: 0 1px; }
.ext { margin: 0 5px 0 2px; }
.ext svg, .lock svg, .msg svg { width: 9px; height: 9px; }
.combo { display: flex; position: relative; width: 41px; }
.combo select { width: 100%; }
.combo svg { position: absolute; right: 3px; top: 3px; width: 5px; height: 5px; pointer-events: none; }
.lock { margin: 0 3px 0 5px; }
.spin { display: flex; width: 43px; margin-right: 3px; position: relative; }
.spin input { width: 100%; }
.spin span { position: absolute; right: 1px; top: 1px; border-left: 1px solid #ddd; }
.spin svg { width: 5px; height: 5px; margin-left: 1px; }
.info .rot { margin-right: 4px; }
.status .tick { width: 8px; height: 8px; padding: 0; margin-right: 1px; display: flex; align-items: center; justify-content: center; }
.tick:checked::after { content: ""; width: 3px; height: 6px; border: solid #222; border-width: 0 1px 1px 0; transform: rotate(40deg); }
.info .rl { margin-right: 5px; }
.crs { gap: 1px; margin-right: 10px; }
.crs svg { width: 8px; height: 8px; }
```
